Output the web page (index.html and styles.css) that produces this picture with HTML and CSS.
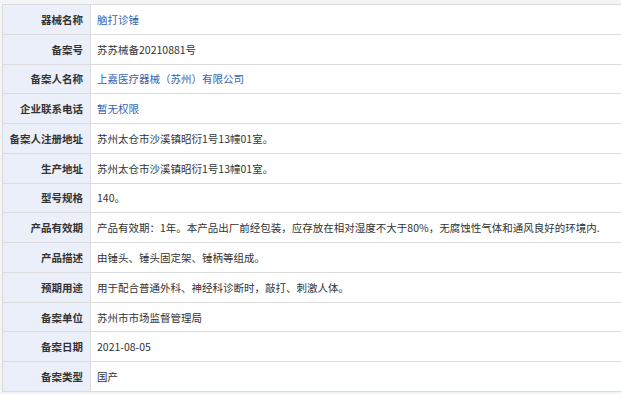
FILE: index.html
```html
<!DOCTYPE html>
<html lang="zh-CN">
<head>
<meta charset="utf-8">
<title>器械备案详情</title>
<link rel="stylesheet" href="styles.css">
</head>
<body>
<div class="sheet">
  <div class="row"><div class="label">器械名称</div><div class="value link">脑打诊锤</div></div>
  <div class="row"><div class="label">备案号</div><div class="value">苏苏械备20210881号</div></div>
  <div class="row"><div class="label">备案人名称</div><div class="value link">上嘉医疗器械（苏州）有限公司</div></div>
  <div class="row"><div class="label">企业联系电话</div><div class="value link">暂无权限</div></div>
  <div class="row"><div class="label">备案人注册地址</div><div class="value">苏州太仓市沙溪镇昭衍1号13幢01室。</div></div>
  <div class="row"><div class="label">生产地址</div><div class="value">苏州太仓市沙溪镇昭衍1号13幢01室。</div></div>
  <div class="row"><div class="label">型号规格</div><div class="value">140。</div></div>
  <div class="row"><div class="label">产品有效期</div><div class="value">产品有效期：1年。本产品出厂前经包装，应存放在相对湿度不大于80%，无腐蚀性气体和通风良好的环境内.</div></div>
  <div class="row"><div class="label">产品描述</div><div class="value">由锤头、锤头固定架、锤柄等组成。</div></div>
  <div class="row"><div class="label">预期用途</div><div class="value">用于配合普通外科、神经科诊断时，敲打、刺激人体。</div></div>
  <div class="row"><div class="label">备案单位</div><div class="value">苏州市市场监督管理局</div></div>
  <div class="row"><div class="label">备案日期</div><div class="value">2021-08-05</div></div>
  <div class="row"><div class="label">备案类型</div><div class="value">国产</div></div>
</div>
</body>
</html>
```
FILE: styles.css
```css
html, body {
  margin: 0;
  padding: 0;
  background: #f2f4f5;
  overflow: hidden;
}
body {
  font-family: "Noto Sans CJK SC", "Noto Sans", sans-serif;
  font-size: 10.5px;
  color: #333;
}
.sheet {
  margin: 4px 0 0 2px;
  width: 640px;
  border-top: 1px solid #dcdcdc;
  border-left: 1px solid #dcdcdc;
  background: #fff;
}
.row {
  display: flex;
  height: 29.77px;
  box-sizing: border-box;
  border-bottom: 1px solid #dcdcdc;
}
.label {
  flex: 0 0 88px;
  box-sizing: border-box;
  border-right: 1px solid #dcdcdc;
  background: #ebeff9;
  font-weight: bold;
  text-align: right;
  padding-right: 7px;
  display: flex;
  align-items: center;
  justify-content: flex-end;
  white-space: nowrap;
}
.value {
  flex: 1;
  padding-left: 6px;
  display: flex;
  align-items: center;
  white-space: nowrap;
}
.link {
  color: #3462b0;
}
```
